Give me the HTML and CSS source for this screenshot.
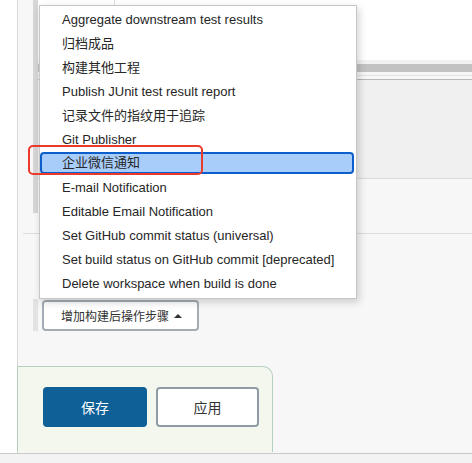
FILE: index.html
```html
<!DOCTYPE html>
<html lang="zh">
<head>
<meta charset="utf-8">
<title>Post-build actions</title>
<link rel="stylesheet" href="styles.css">
</head>
<body>
<div class="page">
  <aside class="sidebar"></aside>
  <main class="main">
    <section class="section">
      <div class="sec-head"><div class="sec-cell"></div></div>
      <div class="bar-light"></div>
      <div class="bar-gray"></div>
      <div class="bar-gap"></div>
      <div class="bar-gap2"></div>
      <div class="sec-panel"></div>
    </section>
    <div class="divider"></div>
    <div class="actions">
      <button class="add-btn">增加构建后操作步骤 <span class="caret"></span></button>
    </div>
    <div class="savebox">
      <button class="btn-save">保存</button>
      <button class="btn-apply">应用</button>
    </div>
  </main>
</div>
<div class="footer"></div>

<ul class="menu">
  <li>Aggregate downstream test results</li>
  <li>归档成品</li>
  <li>构建其他工程</li>
  <li>Publish JUnit test result report</li>
  <li>记录文件的指纹用于追踪</li>
  <li>Git Publisher</li>
  <li class="active">企业微信通知</li>
  <li>E-mail Notification</li>
  <li>Editable Email Notification</li>
  <li>Set GitHub commit status (universal)</li>
  <li>Set build status on GitHub commit [deprecated]</li>
  <li>Delete workspace when build is done</li>
</ul>
<div class="annot"></div>
</body>
</html>
```

FILE: styles.css
```css
* { box-sizing: border-box; }
html, body {
  margin: 0;
  padding: 0;
  width: 472px;
  height: 463px;
  overflow: hidden;
  background: #ffffff;
  font-family: "Liberation Sans", "Noto Sans CJK SC", sans-serif;
  color: #333;
}
body { position: relative; }

.page {
  display: flex;
  height: 453px;
}
.sidebar {
  width: 18px;
  flex: none;
  background: #fff;
  border-right: 1px solid #d9d9d9;
}
.main {
  flex: 1;
  background: #f7f7f7;
  display: flex;
  flex-direction: column;
}

.section {
  margin-left: 15px;
  height: 213px;
  border-left: 5px solid #d6d6d6;
  display: flex;
  flex-direction: column;
}
.sec-head {
  height: 60px;
  background: #fff;
  display: flex;
}
.sec-cell {
  width: 77px;
  border-right: 1px solid #e2e2e2;
}
.bar-light { height: 4px; background: #f1f1f1; }
.bar-gray { height: 8px; background: #c2c2c2; }
.bar-gap { height: 4px; background: #f6f6f6; border-bottom: 1px solid #e2e2e2; }
.bar-gap2 { height: 4px; background: #f7f7f7; border-bottom: 1px solid #b9b9b4; }
.sec-panel {
  height: 99px;
  background: #f0f0f0;
  border-bottom: 1px solid #d9d9d9;
}

.divider {
  margin-left: 5px;
  margin-top: 20px;
  border-top: 1px solid #dcdcdc;
}

.actions {
  margin-top: 65px;
  margin-left: 15px;
  border-left: 5px solid #e3e3e3;
  height: 32px;
  padding-left: 4px;
  padding-top: 1px;
}
.add-btn {
  width: 157px;
  height: 31px;
  background: #fff;
  border: 2px solid #a3acb4;
  border-radius: 4px;
  font-family: inherit;
  font-size: 12px;
  color: #333;
  text-align: left;
  padding: 0 0 0 17px;
  display: flex;
  align-items: center;
  gap: 5px;
}
.caret {
  width: 0;
  height: 0;
  border-left: 4px solid transparent;
  border-right: 4px solid transparent;
  border-bottom: 4px solid #333;
}

.savebox {
  margin-top: 35px;
  margin-left: -1px;
  width: 256px;
  height: 86px;
  background: #f3f7ee;
  border: 1px solid #b7cfbf;
  border-bottom: none;
  border-top-right-radius: 10px;
  padding: 20px 0 0 25px;
  display: flex;
  gap: 9px;
  align-items: flex-start;
}
.btn-save, .btn-apply {
  height: 40px;
  border-radius: 4px;
  font-family: inherit;
  font-size: 14px;
}
.btn-save {
  width: 104px;
  background: #0f6097;
  color: #fff;
  border: none;
}
.btn-apply {
  width: 103px;
  background: #fff;
  color: #333;
  border: 2px solid #909ca5;
}

.footer {
  height: 10px;
  border-top: 1px solid #c9c9c9;
  background: #f3f3f3;
}

.menu {
  position: absolute;
  left: 39px;
  top: 5px;
  width: 318px;
  height: 294px;
  margin: 0;
  padding: 2px 0 2px 0;
  list-style: none;
  background: #fff;
  border: 1px solid #c6c6c6;
  box-shadow: 2px 3px 8px rgba(0, 0, 0, 0.18);
  font-size: 13px;
  color: #262626;
}
.menu li {
  height: 24px;
  line-height: 24px;
  padding-left: 22px;
  white-space: nowrap;
}
.menu li.active {
  height: 22px;
  line-height: 18px;
  margin: 0 2px 2px 0;
  padding-left: 20px;
  background: #a9cdfa;
  border: 2px solid #0d5ecd;
  border-radius: 4px;
}

.annot {
  position: absolute;
  left: 28px;
  top: 145px;
  width: 175px;
  height: 30px;
  border: 2px solid #ea3a2a;
  border-radius: 5px;
}
```
